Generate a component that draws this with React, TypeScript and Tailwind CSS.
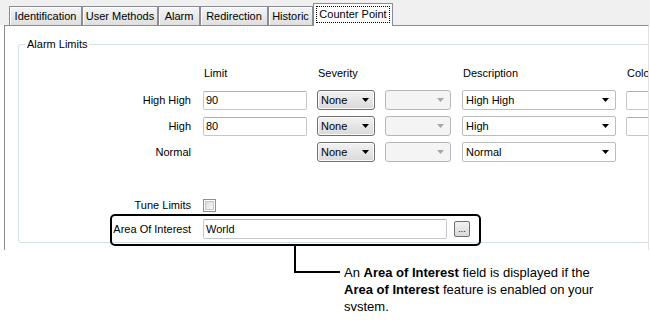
import React from "react";

const Arrow = ({ color = "#000" }: { color?: string }) => (
  <svg width="7" height="4" viewBox="0 0 7 4">
    <path d="M0 0H7L3.5 4Z" fill={color} />
  </svg>
);

const Tab = ({ label, w }: { label: string; w: string }) => (
  <div
    className={`${w} h-[19px] border-l border-t border-r border-[#898c95] bg-linear-to-b from-[#f5f5f5] to-[#dfdfdf] flex items-center justify-center shadow-[inset_1px_1px_0_#ffffff]`}
  >
    {label}
  </div>
);

const Severity = () => (
  <div className="w-[58px] h-[20px] rounded-[3px] border border-[#707070] bg-linear-to-b from-[#f2f2f2] to-[#d9d9d9] flex items-center justify-between pl-[3px] pr-[5px] shadow-[inset_0_0_0_1px_#fbfbfb]">
    <span>None</span>
    <Arrow />
  </div>
);

const Disabled = () => (
  <div className="w-[66px] h-[20px] rounded-[3px] border border-[#b4b6b8] bg-[#f4f4f4] flex items-center justify-end pr-[6px]">
    <Arrow color="#a6a6a6" />
  </div>
);

const Desc = ({ text }: { text: string }) => (
  <div className="w-[154px] h-[20px] rounded-[2px] border border-[#b9bcc1] bg-white flex items-center justify-between pl-[3px] pr-[6px]">
    <span>{text}</span>
    <Arrow />
  </div>
);

const TextBox = ({ w, text }: { w: string; text?: string }) => (
  <div
    className={`${w} h-[19px] rounded-[2px] border border-[#c3c7cc] border-t-[#abadb3] bg-white flex items-center pl-[2px]`}
  >
    {text}
  </div>
);

export default function App() {
  return (
    <div className="w-[650px] h-[320px] bg-white relative overflow-hidden font-['Liberation_Sans',Arial,sans-serif] text-[11px] leading-[13px] text-black">
      {/* tab strip */}
      <div className="h-[25px] bg-[#f0f0f0] flex items-end pl-[9px]">
        <Tab label="Identification" w="w-[73px]" />
        <Tab label="User Methods" w="w-[76px]" />
        <Tab label="Alarm" w="w-[42px]" />
        <Tab label="Redirection" w="w-[68px]" />
        <Tab label="Historic" w="w-[45px]" />
        <div className="relative z-10 -mb-px w-[80px] h-[23px] border-l border-t border-r border-[#898c95] bg-white flex items-center justify-center pb-[2px]">
          <span className="border border-dotted border-black px-[2px] leading-[15px]">Counter Point</span>
        </div>
      </div>

      {/* panel */}
      <div className="ml-[4px] w-[645px] h-[225px] border-l border-t border-r border-[#898c95] border-r-[#e2e2e2] bg-white overflow-hidden pt-[12px] pl-[13px]">
        <fieldset className="w-[700px] border border-[#d5dfe5] rounded-[3px] pb-[3px]">
          <legend className="ml-[7px] px-[1px] leading-[13px]">Alarm Limits</legend>

          {/* headers */}
          <div className="flex items-center h-[13px] mt-[16px]">
            <div className="w-[172px]" />
            <div className="ml-[12px] w-[104px] pl-[1px]">Limit</div>
            <div className="ml-[10px] w-[58px] pl-[1px]">Severity</div>
            <div className="ml-[10px] w-[66px]" />
            <div className="ml-[11px] w-[154px] pl-[1px]">Description</div>
            <div className="ml-[10px] w-[40px] pl-[1px]">Color</div>
          </div>

          {/* rows */}
          <div className="flex items-center h-[20px] mt-[10px]">
            <div className="w-[172px] text-right">High High</div>
            <div className="ml-[12px]">
              <TextBox w="w-[104px]" text="90" />
            </div>
            <div className="ml-[10px]">
              <Severity />
            </div>
            <div className="ml-[10px]">
              <Disabled />
            </div>
            <div className="ml-[11px]">
              <Desc text="High High" />
            </div>
            <div className="ml-[10px]">
              <TextBox w="w-[40px]" />
            </div>
          </div>

          <div className="flex items-center h-[20px] mt-[6px]">
            <div className="w-[172px] text-right">High</div>
            <div className="ml-[12px]">
              <TextBox w="w-[104px]" text="80" />
            </div>
            <div className="ml-[10px]">
              <Severity />
            </div>
            <div className="ml-[10px]">
              <Disabled />
            </div>
            <div className="ml-[11px]">
              <Desc text="High" />
            </div>
            <div className="ml-[10px]">
              <TextBox w="w-[40px]" />
            </div>
          </div>

          <div className="flex items-center h-[20px] mt-[6px]">
            <div className="w-[172px] text-right">Normal</div>
            <div className="ml-[12px] w-[104px]" />
            <div className="ml-[10px]">
              <Severity />
            </div>
            <div className="ml-[10px]">
              <Disabled />
            </div>
            <div className="ml-[11px]">
              <Desc text="Normal" />
            </div>
          </div>

          {/* Tune limits */}
          <div className="flex items-center h-[13px] mt-[37px]">
            <div className="w-[172px] text-right">Tune Limits</div>
            <div className="ml-[12px] w-[13px] h-[13px] border border-[#8e8f8f] bg-white p-[1px]">
              <div className="w-full h-full bg-linear-to-br from-[#dcdcdc] to-[#f8f8f8] border border-[#c8c8c8]" />
            </div>
          </div>

          {/* Area of interest */}
          <div className="flex items-center h-[20px] mt-[7px]">
            <div className="w-[172px] text-right">Area Of Interest</div>
            <div className="ml-[12px] w-[244px] h-[20px] rounded-[2px] border border-[#c3c7cc] border-t-[#abadb3] bg-white flex items-center pl-[2px]">
              World
            </div>
            <div className="ml-[7px] w-[16px] h-[16px] rounded-[2px] border border-[#707070] bg-linear-to-b from-[#f2f2f2] to-[#d9d9d9] flex items-end justify-center text-[9px] leading-[9px] pb-[2px]">
              ...
            </div>
          </div>
        </fieldset>
      </div>

      {/* callout text */}
      <div className="pl-[344px] pt-[14px] font-['Liberation_Sans',Arial,sans-serif] text-[13px] leading-[17px] text-black">
        An <b>Area of Interest</b> field is displayed if the
        <br />
        <b>Area of Interest</b> feature is enabled on your
        <br />
        svstem.
      </div>

      {/* highlight annotation */}
      <div className="absolute left-[110px] top-[214px] w-[371px] h-[32px] border-2 border-black rounded-[5px]" />
      <div className="absolute left-[294px] top-[246px] w-[2px] h-[27px] bg-black" />
      <div className="absolute left-[294px] top-[271px] w-[46px] h-[2px] bg-black" />
    </div>
  );
}
